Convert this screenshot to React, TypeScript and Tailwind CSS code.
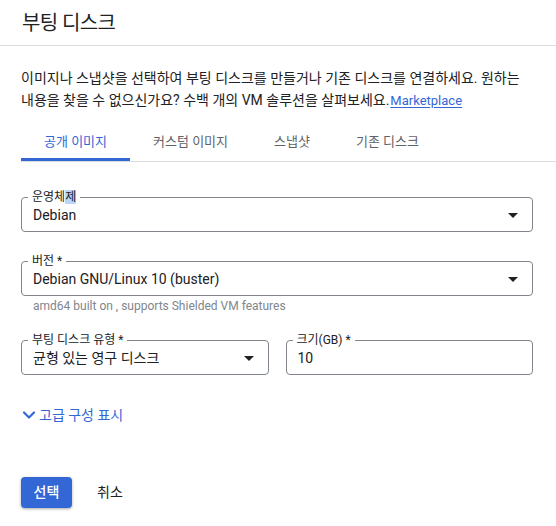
import React from 'react';
import { ChevronDown } from 'lucide-react';

const Arrow = () => (
  <svg width="10" height="5" viewBox="0 0 10 5" className="shrink-0">
    <path d="M0 0h10L5 5z" fill="#202124" />
  </svg>
);

type FieldProps = {
  label: React.ReactNode;
  value: string;
  select?: boolean;
};

const Field = ({ label, value, select = true }: FieldProps) => (
  <fieldset className="min-w-0 rounded border border-[#80868b] pb-[6px] pl-[6px] pr-[14px]">
    <legend className="px-1 text-[12px] leading-4 text-[#202124]">{label}</legend>
    <div className="flex h-5 items-center justify-between pl-[5px] text-[14px] leading-5 text-[#202124]">
      <span>{value}</span>
      {select && <Arrow />}
    </div>
  </fieldset>
);

const tabs = ['공개 이미지', '커스텀 이미지', '스냅샷', '기존 디스크'];

export default function App() {
  return (
    <div className="min-h-[526px] w-[556px] bg-white font-['Roboto','Noto_Sans_CJK_KR',sans-serif] text-[#202124]">
      {/* header */}
      <div className="flex h-[46px] items-center border-b border-[#dadce0] pl-[22px]">
        <h1 className="text-[20px] font-normal tracking-[-0.6px]">부팅 디스크</h1>
      </div>

      <div className="pl-[21px]">
        <p className="mt-[21px] break-keep pr-[23px] text-[14px] leading-[22px]">
          이미지나 스냅샷을 선택하여 부팅 디스크를 만들거나 기존 디스크를 연결하세요. 원하는 내용을 찾을 수
          없으신가요? 수백 개의 VM 솔루션을 살펴보세요.
          <a href="#" className="ml-[1px] text-[13px] leading-none text-[#3367d6] underline underline-offset-2">
            Marketplace
          </a>
        </p>

        {/* tabs */}
        <div className="mt-[11px] flex border-b border-[#dadce0]">
          {tabs.map((t, i) => (
            <div key={t} className="flex h-[39px] flex-col">
              <div
                className={`flex flex-1 items-center px-[23px] pt-1 text-[13px] ${
                  i === 0 ? 'text-[#3367d6]' : 'text-[#5f6368]'
                }`}
              >
                {t}
              </div>
              <div className={`h-[3px] ${i === 0 ? 'bg-[#3367d6]' : 'bg-transparent'}`} />
            </div>
          ))}
        </div>

        <div className="pr-[23px]">
          <div className="mt-[27px]">
            <Field
              label={
                <>
                  운영체<span className="bg-[#b9d6f7]">제</span>
                </>
              }
              value="Debian"
            />
          </div>

          <div className="mt-[21px]">
            <Field label="버전 *" value="Debian GNU/Linux 10 (buster)" />
            <p className="mt-[2px] pl-[12px] text-[12px] leading-4 text-[#80868b]">
              amd64 built on , supports Shielded VM features
            </p>
          </div>

          <div className="mt-[18px] grid grid-cols-2 gap-[17px]">
            <Field label="부팅 디스크 유형 *" value="균형 있는 영구 디스크" />
            <Field label="크기(GB) *" value="10" select={false} />
          </div>

          <button className="mt-[30px] flex h-5 items-center text-[14px] text-[#3367d6]">
            <ChevronDown size={20} strokeWidth={2.6} className="-ml-[2px]" />
            고급 구성 표시
          </button>

          <div className="mt-[52px] flex items-center">
            <button className="h-[31px] w-[51px] rounded bg-[#3367d6] text-[14px] font-medium text-white shadow-[0_1px_3px_rgba(0,0,0,0.35)]">
              선택
            </button>
            <button className="ml-[25px] text-[14px] text-[#202124]">취소</button>
          </div>
        </div>
      </div>
    </div>
  );
}
